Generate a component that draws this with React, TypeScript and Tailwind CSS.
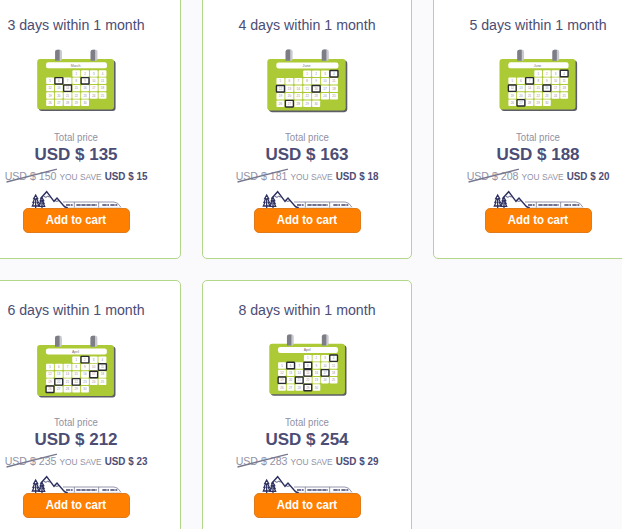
type Offer = {
    days: number;
    price: number;
    oldPrice: number;
    save: number;
    month: string;
    box: string;
    marked: number[];
};

// marked: cell index in a 7 column month (row * 7 + col)
const offers: Offer[] = [
    { days: 3, price: 135, oldPrice: 150, save: 15, month: "March", box: "translate(1.2 14) scale(0.985 0.99)", marked: [8, 11, 16] },
    { days: 4, price: 163, oldPrice: 181, save: 18, month: "June", box: "translate(0.3 14) scale(1.005 1.01)", marked: [6, 14, 18, 29] },
    { days: 5, price: 188, oldPrice: 208, save: 20, month: "June", box: "translate(1.5 14) scale(0.975 0.99)", marked: [6, 9, 14, 18, 29] },
    { days: 6, price: 212, oldPrice: 235, save: 23, month: "April", box: "translate(1.1 15) scale(0.985 1)", marked: [4, 13, 19, 22, 24, 28] },
    { days: 8, price: 254, oldPrice: 283, save: 29, month: "April", box: "translate(2.3 13.7) scale(0.97 0.99)", marked: [6, 8, 10, 17, 19, 21, 23, 31] },
];

const cells = Array.from({ length: 30 }, (_, i) => i + 3);

const Calendar = ({ month, box, marked }: Pick<Offer, "month" | "box" | "marked">) => (
    <svg className="mt-[10px] h-[72px] w-[81px] shrink-0" viewBox="0 0 81 72">
        <g transform={box}>
            <rect x="1.6" y="1.6" width="78" height="51" rx="3" fill="#5d5d68" />
            <rect x="0" y="0" width="78" height="51" rx="3" fill="#acca35" />
            {[18.2, 54.2].map((x) => (
                <g key={x}>
                    <rect x={x} y="-9.3" width="7" height="11" rx="2" fill="#c9c9d0" />
                    <path d={`M${x + 4.6} -9.3h-2.4a2.2 2 0 0 0-2.2 2v9h4.6z`} fill="#7d7d86" />
                </g>
            ))}
            <rect x="9" y="3.4" width="61.8" height="6" rx="2.2" fill="#fff" />
            <text x="39" y="7.7" fontSize="3.6" textAnchor="middle" fill="#6d6d77">{month}</text>
            {cells.map((cell, i) => {
                const x = 9.1 + (cell % 7) * 8.87;
                const y = 11.4 + Math.floor(cell / 7) * 7.4;
                return (
                    <g key={cell}>
                        <rect x={x} y={y} width="8" height="6.5" rx="0.8" fill="#fff" />
                        <text x={x + 4} y={y + 4.3} fontSize="3" textAnchor="middle" fill="#94949d">{i + 1}</text>
                    </g>
                );
            })}
            {marked.map((cell) => (
                <rect
                    key={cell}
                    x={9.1 + (cell % 7) * 8.87}
                    y={11.4 + Math.floor(cell / 7) * 7.4}
                    width="8"
                    height="6.5"
                    rx="0.6"
                    fill="none"
                    stroke="#2b2b33"
                    strokeWidth="1.4"
                />
            ))}
        </g>
    </svg>
);

const Train = () => (
    <svg className="mt-[5px] h-[18px] w-[93px] shrink-0" viewBox="60 30 279 54" fill="none" stroke="#2d3060">
        {/* trees */}
        <g strokeWidth="3.8">
            <path d="M77 45l-6 11h3l-5 11h3l-5 11h20l-5-11h3l-5-11h3zM77 56v28" />
            <path d="M96 53l-5 9h2l-4 8h2l-4 9h17l-4-9h2l-4-8h3zM96 62v22" />
        </g>
        {/* mountains */}
        <path d="M91 56L110 35l22 29 9-10 20 23q5 6 13 6" strokeWidth="4.2" />
        <path d="M101 49l7 3 4-3 7 2M135 62l5 2 7-2" strokeWidth="2.4" />
        {/* train */}
        <path d="M159 66h153q12 0 21 16M193 66v17M266 66v17" stroke="#7b7d99" strokeWidth="2.4" />
        <path d="M168 75h20M199 75h62M277 75h20M301 75h21" stroke="#44466e" strokeWidth="4.5" strokeDasharray="13 2" />
        <path d="M172 82h160" stroke="#b9bac8" strokeWidth="1.5" />
    </svg>
);

const Card = ({ days, price, oldPrice, save, month, box, marked }: Offer) => (
    <div className="flex h-[264px] flex-col items-center rounded-[5px] border border-[#b4d68a] bg-white pt-[19px] whitespace-nowrap">
        <h2 className="scale-y-[1.07] text-[14.2px] leading-5">{days} days within 1 month</h2>
        <Calendar month={month} box={box} marked={marked} />
        <div className="mt-[14px] scale-y-[1.08] text-[9.65px] leading-[14px] text-[#8f8fa3]">Total price</div>
        <div className="text-[17px] leading-5 font-bold">USD $ {price}</div>
        <div className="flex h-5 translate-y-[0.5px] scale-y-[1.05] items-baseline gap-[3px] leading-5">
            <span className="relative text-[10.6px] text-[#9293a6]">
                USD $ {oldPrice}
                <svg className="absolute top-[2.5px] left-0 h-[15px] w-[53px]" viewBox="0 0 53 15">
                    <path d="M1.5 13.2L52 1" stroke="#77788f" strokeWidth="1.3" />
                </svg>
            </span>
            <span className="text-[8.4px] text-[#9293a6]">YOU SAVE</span>
            <span className="text-[9.85px] font-bold">USD $ {save}</span>
        </div>
        <Train />
        <button className="h-[25px] w-[107px] shrink-0 rounded-[5px] border border-[#e07b1c] bg-[#ff8000] text-[11.45px] leading-[21px] font-bold text-white">
            <span className="block scale-y-[1.06]">Add to cart</span>
        </button>
    </div>
);

const App = () => {
    return (
        <main className="h-[529px] w-[622px] overflow-hidden bg-[#fafafc] font-['Liberation_Sans',Arial,sans-serif] text-[#4c4d75]">
            <div className="-mt-[5px] -ml-[29px] grid w-[672px] grid-cols-[210px_210px_210px] gap-[21px]">
                {offers.map((offer) => (
                    <Card key={offer.days} {...offer} />
                ))}
            </div>
        </main>
    );
};

export default App;
